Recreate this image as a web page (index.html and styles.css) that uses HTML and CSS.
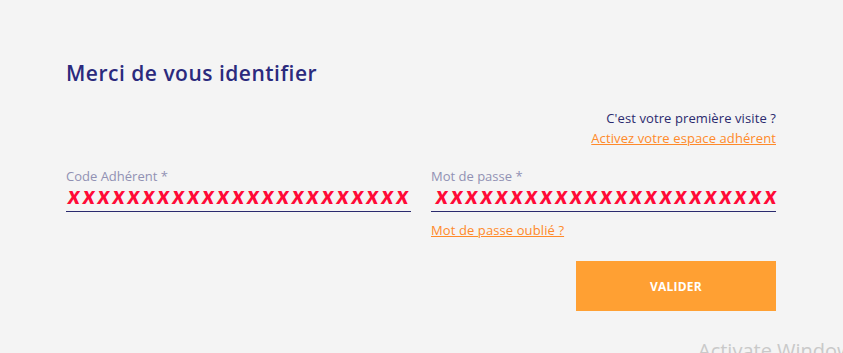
FILE: index.html
```html
<!DOCTYPE html>
<html lang="fr">
<head>
<meta charset="utf-8">
<link rel="stylesheet" href="styles.css">
</head>
<body>
<main class="page">
  <h1 class="title">Merci de vous identifier</h1>
  <div class="first">
    <p class="first-q">C'est votre première visite ?</p>
    <a class="link" href="#">Activez votre espace adhérent</a>
  </div>
  <div class="fields">
    <div class="field">
      <label class="label">Code Adhérent *</label>
      <div class="value">xxxxxxxxxxxxxxxxxxxxxxx</div>
    </div>
    <div class="field">
      <label class="label">Mot de passe *</label>
      <div class="value value-pw">xxxxxxxxxxxxxxxxxxxxxxx</div>
      <a class="link forgot" href="#">Mot de passe oublié ?</a>
    </div>
  </div>
  <div class="actions">
    <button class="btn">VALIDER</button>
  </div>
</main>
<div class="watermark">Activate Windows</div>
</body>
</html>
```
FILE: styles.css
```css
html, body {
  margin: 0;
  padding: 0;
  background: #f4f4f4;
  height: 100%;
  overflow: hidden;
}
body {
  font-family: "Open Sans", Lato, sans-serif;
  position: relative;
}
.page {
  width: 710px;
  padding: 59px 0 0 66px;
}
.title {
  margin: 0;
  font-size: 21px;
  font-weight: 600;
  color: #2b2a7d;
  line-height: 28px;
  letter-spacing: 0.5px;
}
.first {
  margin-top: 22px;
  text-align: right;
  display: flex;
  flex-direction: column;
  align-items: flex-end;
}
.first-q {
  margin: 0;
  font-size: 13px;
  color: #2b2a6e;
  line-height: 18px;
  letter-spacing: 0.1px;
}
.link {
  font-size: 13px;
  color: #ff8a2a;
  text-decoration: underline;
  line-height: 18px;
  margin-top: 2px;
  letter-spacing: 0.1px;
}
.fields {
  margin-top: 21px;
  display: grid;
  grid-template-columns: 345px 345px;
  column-gap: 20px;
}
.field {
  display: flex;
  flex-direction: column;
}
.label {
  font-size: 13px;
  color: #9191b3;
  line-height: 16px;
}
.value {
  font-family: Lato, sans-serif;
  font-size: 24px;
  font-style: italic;
  font-weight: 900;
  color: #ff0a37;
  line-height: 22px;
  padding: 0 0 5px 2px;
  border-bottom: 1px solid #2a2a6e;
  white-space: nowrap;
  overflow: visible;
  letter-spacing: 3px;
}
.value-pw {
  padding-left: 5px;
}
.forgot {
  align-self: flex-start;
  margin-top: 9px;
}
.actions {
  margin-top: 22px;
  display: flex;
  justify-content: flex-end;
}
.btn {
  width: 200px;
  height: 50px;
  border: none;
  background: #ffa033;
  color: #fff;
  font-family: "Open Sans", Lato, sans-serif;
  font-weight: 700;
  font-size: 12px;
  letter-spacing: 0.2px;
}
.watermark {
  position: absolute;
  left: 698px;
  top: 337px;
  font-family: "Open Sans", sans-serif;
  font-size: 20px;
  color: #c9c9c9;
  white-space: nowrap;
}
```
